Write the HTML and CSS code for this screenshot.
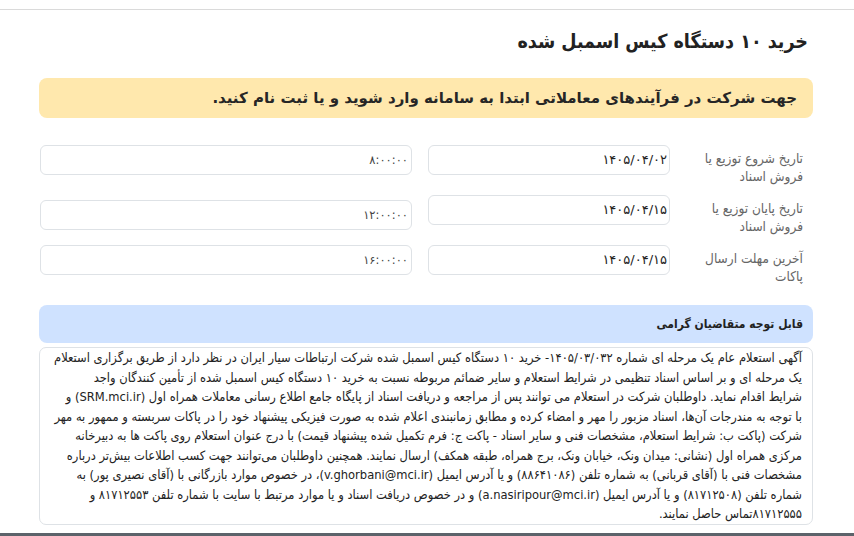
FILE: index.html
```html
<!DOCTYPE html>
<html lang="fa" dir="rtl">
<head>
<meta charset="utf-8">
<title>خرید ۱۰ دستگاه کیس اسمبل شده</title>
<link rel="stylesheet" href="styles.css">
</head>
<body>
<div class="topbar"></div>
<main class="page">
  <h1 class="title">خرید ۱۰ دستگاه کیس اسمبل شده</h1>
  <div class="alert">جهت شرکت در فرآیندهای معاملاتی ابتدا به سامانه وارد شوید و یا ثبت نام کنید.</div>
  <div class="form">
    <div class="row">
      <div class="label">تاریخ شروع توزیع یا<br>فروش اسناد</div>
      <div class="field date">۱۴۰۵/۰۴/۰۲</div>
      <div class="field time">۸:۰۰:۰۰</div>
    </div>
    <div class="row">
      <div class="label">تاریخ پایان توزیع یا<br>فروش اسناد</div>
      <div class="field date">۱۴۰۵/۰۴/۱۵</div>
      <div class="field time shift">۱۲:۰۰:۰۰</div>
    </div>
    <div class="row">
      <div class="label">آخرین مهلت ارسال<br>پاکات</div>
      <div class="field date">۱۴۰۵/۰۴/۱۵</div>
      <div class="field time">۱۶:۰۰:۰۰</div>
    </div>
  </div>
  <div class="notice-head">قابل توجه متقاضیان گرامی</div>
  <div class="notice-body">
    <div class="line">آگهی استعلام عام یک مرحله ای شماره ۱۴۰۵/۰۳/۰۳۲- خرید ۱۰ دستگاه کیس اسمبل شده شرکت ارتباطات سیار ایران در نظر دارد از طریق برگزاری استعلام</div>
    <div class="line">یک مرحله ای و بر اساس اسناد تنظیمی در شرایط استعلام و سایر ضمائم مربوطه نسبت به خرید ۱۰ دستگاه کیس اسمبل شده از تأمین کنندگان واجد</div>
    <div class="line">شرایط اقدام نماید. داوطلبان شرکت در استعلام می توانند پس از مراجعه و دریافت اسناد از پایگاه جامع اطلاع رسانی معاملات همراه اول (SRM.mci.ir) و</div>
    <div class="line">با توجه به مندرجات آن‌ها، اسناد مزبور را مهر و امضاء کرده و مطابق زمانبندی اعلام شده به صورت فیزیکی پیشنهاد خود را در پاکات سربسته و ممهور به مهر</div>
    <div class="line">شرکت (پاکت ب: شرایط استعلام، مشخصات فنی و سایر اسناد - پاکت ج: فرم تکمیل شده پیشنهاد قیمت) با درج عنوان استعلام روی پاکت ها به دبیرخانه</div>
    <div class="line">مرکزی همراه اول (نشانی: میدان ونک، خیابان ونک، برج همراه، طبقه همکف) ارسال نمایند. همچنین داوطلبان می‌توانند جهت کسب اطلاعات بیش‌تر درباره</div>
    <div class="line">مشخصات فنی با (آقای قربانی) به شماره تلفن (۸۸۶۴۱۰۸۶) و یا آدرس ایمیل (v.ghorbani@mci.ir)، در خصوص موارد بازرگانی با (آقای نصیری پور) به</div>
    <div class="line">شماره تلفن (۸۱۷۱۲۵۰۸) و یا آدرس ایمیل (a.nasiripour@mci.ir) و در خصوص دریافت اسناد و یا موارد مرتبط با سایت با شماره تلفن ۸۱۷۱۲۵۵۳ و</div>
    <div class="line">۸۱۷۱۲۵۵۵تماس حاصل نمایند.</div>
  </div>
</main>
<footer class="footer"></footer>
</body>
</html>
```

FILE: styles.css
```css
* { box-sizing: border-box; }
html, body { margin: 0; padding: 0; }
body {
  background: #fff;
  color: #212529;
  font-family: "DejaVu Sans Condensed", "DejaVu Sans", sans-serif;
  font-stretch: condensed;
  width: 854px;
  overflow: hidden;
}
.topbar {
  height: 10px;
  border-bottom: 1px solid #dadada;
}
.page {
  padding: 0 41px 0 39px;
}
.title {
  margin: 0;
  padding: 18px 5px 0 0;
  height: 68px;
  font-size: 19.5px;
  font-weight: bold;
  line-height: 28px;
  color: #222;
}
.alert {
  background: #ffe8ad;
  border-radius: 8px;
  height: 40px;
  line-height: 40px;
  padding: 0 16px 0 10px;
  font-family: "DejaVu Sans", sans-serif;
  font-stretch: normal;
  font-size: 15px;
  font-weight: bold;
  color: #262626;
}
.form {
  margin-top: 22px;
  display: flex;
  flex-direction: column;
  gap: 4px;
}
.row {
  display: flex;
  align-items: flex-start;
  height: 46px;
}
.label {
  width: 143px;
  padding: 9px 10px 0 0;
  font-size: 13.5px;
  line-height: 18px;
  color: #666;
}
.field {
  margin-top: 5px;
  height: 30px;
  border: 1px solid #dee2e6;
  border-radius: 6px;
  line-height: 28px;
  padding-right: 2px;
  color: #222;
  font-family: "DejaVu Sans", sans-serif;
  font-stretch: normal;
}
.date {
  width: 242px;
  font-size: 13px;
}
.time {
  width: 372px;
  margin-right: 16px;
  font-size: 11.5px;
  color: #444;
  padding-right: 3px;
}
.time.shift { margin-top: 10px; }
.notice-head {
  margin-top: 19px;
  height: 38px;
  line-height: 38px;
  background: #cfe2ff;
  border-radius: 8px;
  padding-right: 10px;
  font-size: 12px;
  font-weight: bold;
  color: #222;
}
.notice-body {
  margin-top: 4px;
  border: 1px solid #dee2e6;
  border-radius: 7px;
  padding: 0 10px 2px 4px;
  height: 178px;
  font-size: 12.8px;
  line-height: 19.5px;
  color: #222;
}
.line { white-space: nowrap; }
.footer {
  margin-top: 8px;
  height: 4px;
  background: #5c636a;
}
```
